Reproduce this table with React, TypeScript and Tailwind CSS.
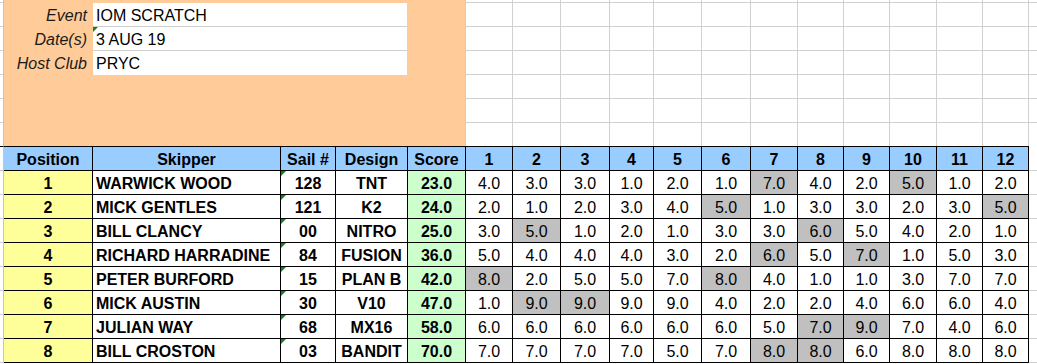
type Race = { v: string; drop?: boolean }

interface Entry {
  pos: number
  skipper: string
  sail: string
  design: string
  score: string
  races: Race[]
}

// d = discarded race (grey cell)
const r = (s: string): Race[] =>
  s.split(' ').map(x => (x.startsWith('*') ? { v: x.slice(1), drop: true } : { v: x }))

const entries: Entry[] = [
  { pos: 1, skipper: 'WARWICK WOOD', sail: '128', design: 'TNT', score: '23.0', races: r('4.0 3.0 3.0 1.0 2.0 1.0 *7.0 4.0 2.0 *5.0 1.0 2.0') },
  { pos: 2, skipper: 'MICK GENTLES', sail: '121', design: 'K2', score: '24.0', races: r('2.0 1.0 2.0 3.0 4.0 *5.0 1.0 3.0 3.0 2.0 3.0 *5.0') },
  { pos: 3, skipper: 'BILL CLANCY', sail: '00', design: 'NITRO', score: '25.0', races: r('3.0 *5.0 1.0 2.0 1.0 3.0 3.0 *6.0 5.0 4.0 2.0 1.0') },
  { pos: 4, skipper: 'RICHARD HARRADINE', sail: '84', design: 'FUSION', score: '36.0', races: r('5.0 4.0 4.0 4.0 3.0 2.0 *6.0 5.0 *7.0 1.0 5.0 3.0') },
  { pos: 5, skipper: 'PETER BURFORD', sail: '15', design: 'PLAN B', score: '42.0', races: r('*8.0 2.0 5.0 5.0 7.0 *8.0 4.0 1.0 1.0 3.0 7.0 7.0') },
  { pos: 6, skipper: 'MICK AUSTIN', sail: '30', design: 'V10', score: '47.0', races: r('1.0 *9.0 *9.0 9.0 9.0 4.0 2.0 2.0 4.0 6.0 6.0 4.0') },
  { pos: 7, skipper: 'JULIAN WAY', sail: '68', design: 'MX16', score: '58.0', races: r('6.0 6.0 6.0 6.0 6.0 6.0 5.0 *7.0 *9.0 7.0 4.0 6.0') },
  { pos: 8, skipper: 'BILL CROSTON', sail: '03', design: 'BANDIT', score: '70.0', races: r('7.0 7.0 7.0 7.0 5.0 7.0 *8.0 *8.0 6.0 8.0 8.0 8.0') },
]

const raceW = [
  'w-[47px]', 'w-[48px]', 'w-[49px]', 'w-[44px]', 'w-[48px]', 'w-[49px]',
  'w-[47px]', 'w-[46px]', 'w-[46px]', 'w-[47px]', 'w-[46px]', 'w-[46px]',
]

const topRows = ['h-[3px] border-b', 'h-[24px] border-b', 'h-[24px] border-b', 'h-[24px] border-b', 'h-[24px] border-b', 'h-[24px] border-b', 'h-[23px]']

const Tri = () => (
  <div className="absolute left-0 top-0 h-0 w-0 border-t-[5px] border-r-[5px] border-t-[#13801a] border-r-transparent" />
)

const cell = 'box-border shrink-0 border-r border-black leading-[23px] pt-[1px]'

export default function App() {
  const meta = [
    { label: 'Event', value: 'IOM SCRATCH' },
    { label: 'Date(s)', value: '3 AUG 19', mark: true },
    { label: 'Host Club', value: 'PRYC' },
  ]

  return (
    <div className="w-[1037px] h-[364px] overflow-hidden bg-white text-[16px] text-black font-['Liberation_Sans',Arial,sans-serif]">
      {/* sheet area above the results */}
      <div className="flex h-[146px]">
        <div className="flex w-[4px] shrink-0 flex-col border-r border-[#c4c4c4]">
          {topRows.map((h, i) => (
            <div key={i} className={`box-border ${h} border-[#d0d0d0]`} />
          ))}
        </div>
        <div className="box-border w-[462px] shrink-0 border-r border-[#d0d0d0] bg-[#ffcc99] pt-[3px]">
          {meta.map((m, i) => (
            <div key={m.label} className="flex">
              <div className="w-[89px] shrink-0 pr-[6px] pt-[1px] text-right italic leading-[23px] text-[#1a1a1a]">{m.label}</div>
              <div className={`relative box-border h-[24px] w-[314px] bg-white pl-[3px] pt-[1px] leading-[23px] ${i < 2 ? 'border-b border-[#d0d0d0]' : ''}`}>
                {m.mark && <Tri />}
                {m.value}
              </div>
            </div>
          ))}
        </div>
        <div className="flex flex-col">
          {topRows.map((h, i) => (
            <div key={i} className="flex">
              {raceW.map((w, j) => (
                <div key={j} className={`box-border ${w} ${h} border-r border-[#d0d0d0]`} />
              ))}
              <div className={`box-border w-[8px] ${h} border-[#d0d0d0]`} />
            </div>
          ))}
        </div>
      </div>

      {/* results header */}
      <div className="flex h-[25px] font-bold">
        <div className="box-border h-[25px] w-[4px] shrink-0 border-y border-r border-[#c4c4c4] border-t-black" />
        <div className={`${cell} h-[25px] w-[89px] border-y bg-[#99ccff] text-center`}>Position</div>
        <div className={`${cell} h-[25px] w-[188px] border-y bg-[#99ccff] text-center`}>Skipper</div>
        <div className={`${cell} h-[25px] w-[55px] border-y bg-[#99ccff] text-center`}>Sail #</div>
        <div className={`${cell} h-[25px] w-[72px] border-y bg-[#99ccff] text-center`}>Design</div>
        <div className={`${cell} h-[25px] w-[58px] border-y bg-[#99ccff] text-center`}>Score</div>
        {raceW.map((w, j) => (
          <div key={j} className={`${cell} h-[25px] ${w} border-y bg-[#99ccff] text-center`}>{j + 1}</div>
        ))}
        <div className="box-border h-[25px] w-[8px] border-b border-[#d0d0d0]" />
      </div>

      {entries.map(e => (
        <div key={e.pos} className="flex h-[24px]">
          <div className="box-border h-[24px] w-[4px] shrink-0 border-b border-r border-[#d0d0d0] border-r-[#c4c4c4]" />
          <div className={`${cell} h-[24px] w-[89px] border-b bg-[#ffff99] text-center font-bold`}>{e.pos}</div>
          <div className={`${cell} h-[24px] w-[188px] border-b pl-[3px] font-bold`}>{e.skipper}</div>
          <div className={`${cell} relative h-[24px] w-[55px] border-b text-center font-bold`}>
            <Tri />
            {e.sail}
          </div>
          <div className={`${cell} h-[24px] w-[72px] border-b text-center font-bold`}>{e.design}</div>
          <div className={`${cell} h-[24px] w-[58px] border-b bg-[#ccffcc] text-center font-bold`}>{e.score}</div>
          {e.races.map((x, j) => (
            <div key={j} className={`${cell} h-[24px] ${raceW[j]} border-b text-center ${x.drop ? 'bg-[#c0c0c0]' : ''}`}>
              {x.v}
            </div>
          ))}
          <div className="box-border h-[24px] w-[8px] border-b border-[#d0d0d0]" />
        </div>
      ))}
    </div>
  )
}
